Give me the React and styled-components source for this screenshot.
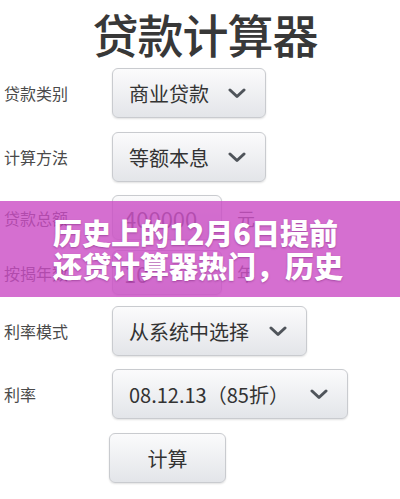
import React from "react";
import styled, { createGlobalStyle } from "styled-components";

const GlobalStyle = createGlobalStyle`
  html, body {
    margin: 0;
    padding: 0;
    background: #ffffff;
  }
  body {
    font-family: "Noto Sans CJK SC", "Noto Sans", sans-serif;
  }
`;

const Chevron = () => (
  <svg width="18" height="11" viewBox="0 0 18 11">
    <polyline
      points="2,2 9,8.5 16,2"
      fill="none"
      stroke="#4f545a"
      strokeWidth="3"
      strokeLinecap="round"
      strokeLinejoin="round"
    />
  </svg>
);

const fields = [
  { label: "贷款类别", kind: "select", value: "商业贷款", width: 154, mt: 0 },
  { label: "计算方法", kind: "select", value: "等额本息", width: 154, mt: 14 },
  { label: "贷款总额", kind: "input", value: "400000", unit: "元", width: 110, mt: 13 },
  { label: "按揭年数", kind: "input", value: "10", unit: "年", width: 110, mt: 10 },
  { label: "利率模式", kind: "select", value: "从系统中选择", width: 195, mt: 11 },
  { label: "利率", kind: "select", value: "08.12.13（85折）", width: 236, mt: 13 },
];

const App = () => {
  return (
    <Page>
      <GlobalStyle />
      <Title>贷款计算器</Title>
      <Form>
        {fields.map((f) => (
          <Row key={f.label} $mt={f.mt}>
            <Label>{f.label}</Label>
            {f.kind === "select" ? (
              <Select $w={f.width}>
                <span>{f.value}</span>
                <Chevron />
              </Select>
            ) : (
              <>
                <InputBox $w={f.width}>{f.value}</InputBox>
                <Unit>{f.unit}</Unit>
              </>
            )}
          </Row>
        ))}
        <Row $mt={14}>
          <Label />
          <CalcButton>计算</CalcButton>
        </Row>
      </Form>
      <Banner>
        <BannerText>历史上的12月6日提前还贷计算器热门，历史</BannerText>
      </Banner>
    </Page>
  );
};

export default App;

const Page = styled.div`
  position: relative;
  width: 400px;
  height: 499px;
  overflow: hidden;
  background: #ffffff;
`;

const Title = styled.h1`
  margin: 0;
  padding: 10px 0 0 10px;
  height: 46px;
  font-size: 46px;
  line-height: 46px;
  font-weight: 500;
  color: #383838;
  text-align: center;
  letter-spacing: -1px;
`;

const Form = styled.div`
  display: flex;
  flex-direction: column;
  padding-top: 12px;
`;

const Row = styled.div`
  display: flex;
  align-items: center;
  margin-top: ${(p) => p.$mt}px;
`;

const Label = styled.div`
  width: 108px;
  padding-left: 4px;
  flex-shrink: 0;
  font-size: 16px;
  color: #4a4a4a;
`;

const boxLook = `
  box-sizing: border-box;
  border: 1px solid #c9cbcf;
  border-radius: 6px;
  background: linear-gradient(#fbfbfc, #e3e5e9);
  box-shadow: 0 1px 2px rgba(0, 0, 0, 0.12);
  color: #333;
`;

const Select = styled.div`
  ${boxLook}
  width: ${(p) => p.$w}px;
  height: 50px;
  display: flex;
  align-items: center;
  justify-content: space-between;
  padding: 0 19px 0 16px;
  font-size: 20px;
`;

const InputBox = styled.div`
  ${boxLook}
  width: ${(p) => p.$w}px;
  height: 45px;
  display: flex;
  align-items: center;
  padding-left: 11px;
  font-size: 22px;
  color: #555;
`;

const Unit = styled.span`
  margin-left: 15px;
  font-size: 18px;
  color: #555;
`;

const CalcButton = styled.div`
  ${boxLook}
  margin-left: -3px;
  width: 117px;
  height: 50px;
  display: flex;
  align-items: center;
  justify-content: center;
  font-size: 20px;
`;

const Banner = styled.div`
  position: absolute;
  left: 0;
  right: 0;
  top: 201px;
  height: 96px;
  background: rgba(202, 75, 196, 0.8);
  box-sizing: border-box;
  padding: 15px 40px 0 53px;
`;

const BannerText = styled.div`
  font-size: 29px;
  line-height: 33px;
  font-weight: 900;
  color: #ffffff;
  text-shadow: 0 1px 2px rgba(80, 0, 80, 0.35);
`;
